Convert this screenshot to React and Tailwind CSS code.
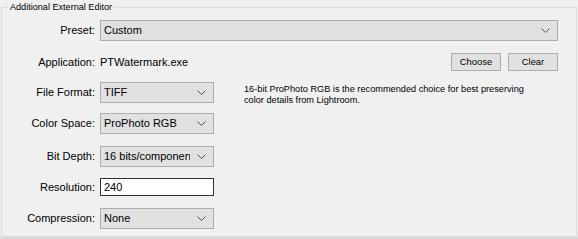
import React from "react";

const font = { fontFamily: '"Liberation Sans", Arial, sans-serif' };

function Chevron() {
  return (
    <svg width="9" height="5" viewBox="0 0 9 5" className="shrink-0 ml-[7px]">
      <path d="M0.5 0.5 L4.5 4.5 L8.5 0.5" fill="none" stroke="#505050" strokeWidth="1" />
    </svg>
  );
}

function Combo({ value, width = "w-[114px]" }) {
  return (
    <div
      className={`${width} h-[21px] shrink-0 flex items-center bg-[#e1e1e1] border border-[#adadad] pl-[3px] pr-[7px]`}
    >
      <span className="flex-1 min-w-0 overflow-hidden whitespace-nowrap text-[11px] text-black">{value}</span>
      <Chevron />
    </div>
  );
}

function Label({ children }) {
  return (
    <div className="w-[94px] shrink-0 text-right pr-[1px] text-[11px] text-black whitespace-nowrap">
      {children}
    </div>
  );
}

function Row({ label, children, className = "" }) {
  return (
    <div className={`flex items-center gap-[4px] ${className}`}>
      <Label>{label}</Label>
      {children}
    </div>
  );
}

function Button({ children }) {
  return (
    <button className="w-[50px] h-[18px] bg-[#e1e1e1] border border-[#adadad] text-[9.4px] text-black leading-none">
      {children}
    </button>
  );
}

export default function App() {
  return (
    <div className="w-[578px] h-[239px] bg-[#f0f0f0] border-b-2 border-[#dadada]" style={font}>
      <fieldset className="ml-[1px] w-[576px] h-[237px] border border-[#dcdcdc] m-0 p-0">
        <legend className="ml-[6px] px-[2px] text-[9.1px] leading-[14px] text-black">
          Additional External Editor
        </legend>

        <div className="flex flex-col pt-[6px]">
          <Row label="Preset:" className="h-[21px]">
            <Combo value="Custom" width="w-[458px]" />
          </Row>

          <Row label="Application:" className="mt-[12px] h-[18px]">
            <span className="text-[11px] text-black flex-1">PTWatermark.exe</span>
            <div className="flex gap-[7px] mr-[18px]">
              <Button>Choose</Button>
              <Button>Clear</Button>
            </div>
          </Row>

          <div className="mt-[11px] h-[21px] flex items-start gap-[4px]">
            <div className="h-[21px] flex items-center">
              <Label>File Format:</Label>
            </div>
            <Combo value="TIFF" />
            <p className="ml-[26px] mt-[2px] text-[9.2px] leading-[11px] text-black whitespace-nowrap">
              16-bit ProPhoto RGB is the recommended choice for best preserving
              <br />
              color details from Lightroom.
            </p>
          </div>

          <Row label="Color Space:" className="mt-[10px] h-[21px]">
            <Combo value="ProPhoto RGB" />
          </Row>

          <Row label="Bit Depth:" className="mt-[12px] h-[21px]">
            <Combo value="16 bits/component" />
          </Row>

          <Row label="Resolution:" className="mt-[11px] h-[18px]">
            <div className="w-[114px] h-[18px] bg-white border border-[#333] flex items-center pl-[3px] text-[11px] text-black">
              240
            </div>
          </Row>

          <Row label="Compression:" className="mt-[12px] h-[20px]">
            <div className="h-[20px] flex items-center">
              <Combo value="None" />
            </div>
          </Row>
        </div>
      </fieldset>
    </div>
  );
}
